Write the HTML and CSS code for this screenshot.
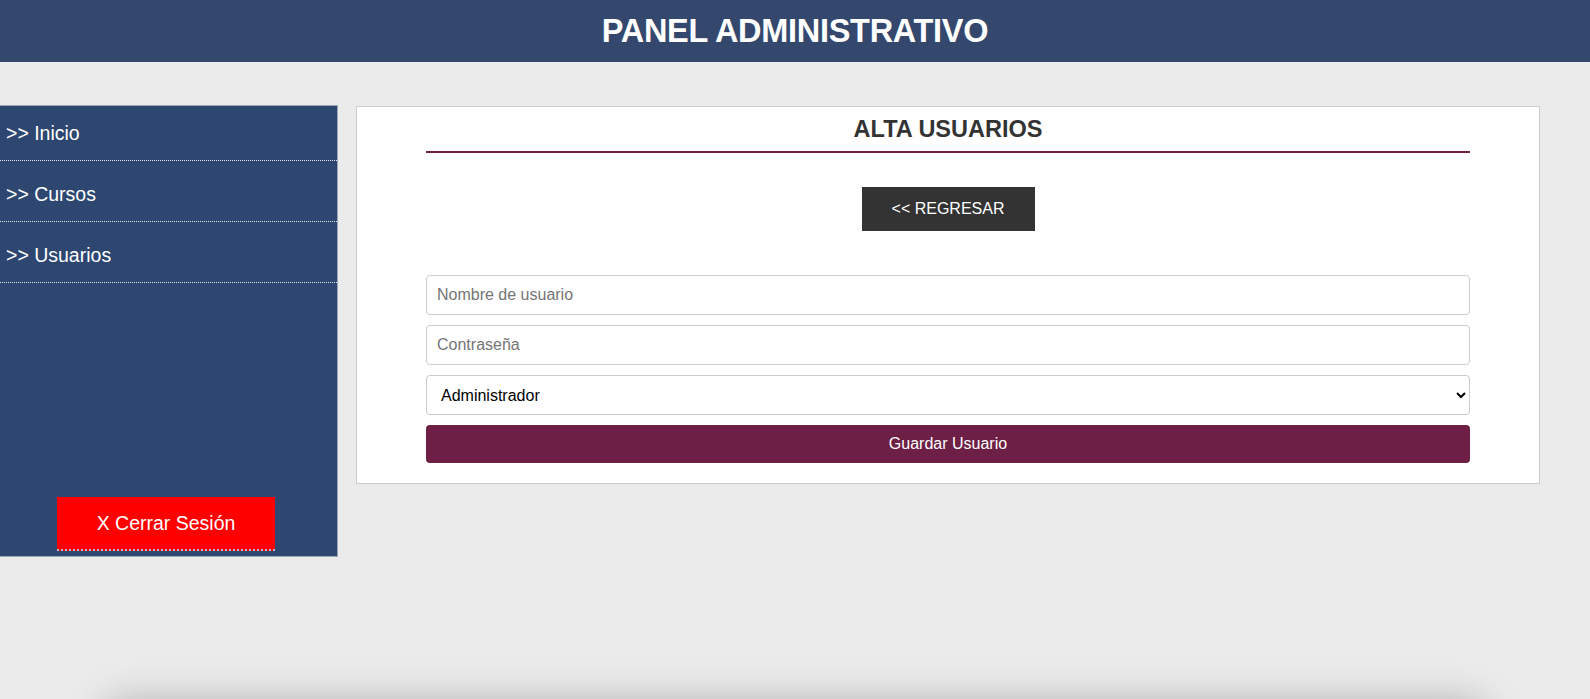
FILE: index.html
```
<!DOCTYPE html>
<html lang="es">
<head>
<meta charset="utf-8">
<title>Panel Administrativo</title>
<link rel="stylesheet" href="styles.css">
</head>
<body>
<header class="topbar">
  <h1 class="topbar-title">PANEL ADMINISTRATIVO</h1>
</header>
<div class="layout">
  <aside class="sidebar">
    <nav class="menu">
      <a class="menu-item first" href="#">&gt;&gt; Inicio</a>
      <a class="menu-item" href="#">&gt;&gt; Cursos</a>
      <a class="menu-item" href="#">&gt;&gt; Usuarios</a>
    </nav>
    <div class="logout-wrap">
      <a class="logout" href="#">X Cerrar Sesión</a>
    </div>
  </aside>
  <main class="card">
    <h2 class="card-title">ALTA USUARIOS</h2>
    <div class="card-body">
      <div class="back-row">
        <a class="back-btn" href="#">&lt;&lt; REGRESAR</a>
      </div>
      <form class="form">
        <input class="field" type="text" placeholder="Nombre de usuario">
        <input class="field" type="password" placeholder="Contraseña">
        <select class="field select">
          <option>Administrador</option>
          <option>Usuario</option>
        </select>
        <button class="save-btn" type="button">Guardar Usuario</button>
      </form>
    </div>
  </main>
</div>
<footer class="footer"></footer>
</body>
</html>
```
FILE: styles.css
```
html {
  overflow: hidden;
}
body {
  margin: 0;
  background: #ebebeb;
  font-family: "Liberation Sans", Arial, Helvetica, sans-serif;
  color: #333;
}
.topbar {
  background: #34486e;
  height: 62px;
  display: flex;
  align-items: center;
  justify-content: center;
}
.topbar-title {
  margin: 0;
  color: #fff;
  font-size: 32.5px;
  font-weight: bold;
  line-height: 62px;
  letter-spacing: -0.3px;
}
.layout {
  display: flex;
  align-items: flex-start;
  gap: 18px;
  padding: 43px 50px 0 0;
}
.sidebar {
  width: 337px;
  height: 450px;
  flex: none;
  background: #2e4770;
  border: 1px solid #9aa5b8;
  border-left: none;
  display: flex;
  flex-direction: column;
}
.menu {
  display: flex;
  flex-direction: column;
}
.menu-item {
  display: block;
  color: #fff;
  text-decoration: none;
  font-size: 19.5px;
  line-height: 20px;
  padding: 23px 6px 17px;
  border-bottom: 1px dotted #e8e8e8;
}
.menu-item.first {
  padding-top: 17px;
}
.logout-wrap {
  margin-top: auto;
  padding: 0 0 5px 57px;
}
.logout {
  display: block;
  width: 218px;
  height: 52px;
  line-height: 52px;
  background: #ff0000;
  color: #fff;
  text-decoration: none;
  text-align: center;
  font-size: 19.5px;
  border-bottom: 2px dotted #b9bdc9;
}
.card {
  flex: 1;
  margin-top: 1px;
  background: #fff;
  border: 1px solid #cccccc;
  padding: 10px 69px 20px 69px;
}
.card-title {
  margin: 0;
  text-align: center;
  font-size: 23.5px;
  line-height: 25px;
  font-weight: bold;
  color: #333;
  padding-bottom: 9px;
  border-bottom: 2px solid #6d1f45;
}
.back-row {
  display: flex;
  justify-content: center;
  padding: 34px 0 44px;
}
.back-btn {
  display: block;
  width: 173px;
  height: 44px;
  line-height: 44px;
  background: #333333;
  color: #fff;
  text-align: center;
  text-decoration: none;
  font-size: 16px;
}
.form {
  display: flex;
  flex-direction: column;
  gap: 10px;
  margin: 0;
}
.field {
  box-sizing: border-box;
  height: 40px;
  width: 100%;
  border: 1px solid #cccccc;
  border-radius: 4px;
  padding: 0 10px;
  font-family: "Liberation Sans", Arial, Helvetica, sans-serif;
  font-size: 16px;
  color: #000;
  background: #fff;
  margin: 0;
}
.field::placeholder {
  color: #757575;
}
.select {
  padding: 0 10px;
}
.save-btn {
  height: 38px;
  margin: 0;
  border: none;
  border-radius: 4px;
  background: #6d1f45;
  color: #fff;
  font-family: "Liberation Sans", Arial, Helvetica, sans-serif;
  font-size: 16px;
}
.footer {
  width: 1380px;
  height: 80px;
  margin: 150px auto 0;
  background: #ebebeb;
  border-radius: 20px;
  box-shadow: 0 -4px 40px rgba(0, 0, 0, 0.28);
}
```
